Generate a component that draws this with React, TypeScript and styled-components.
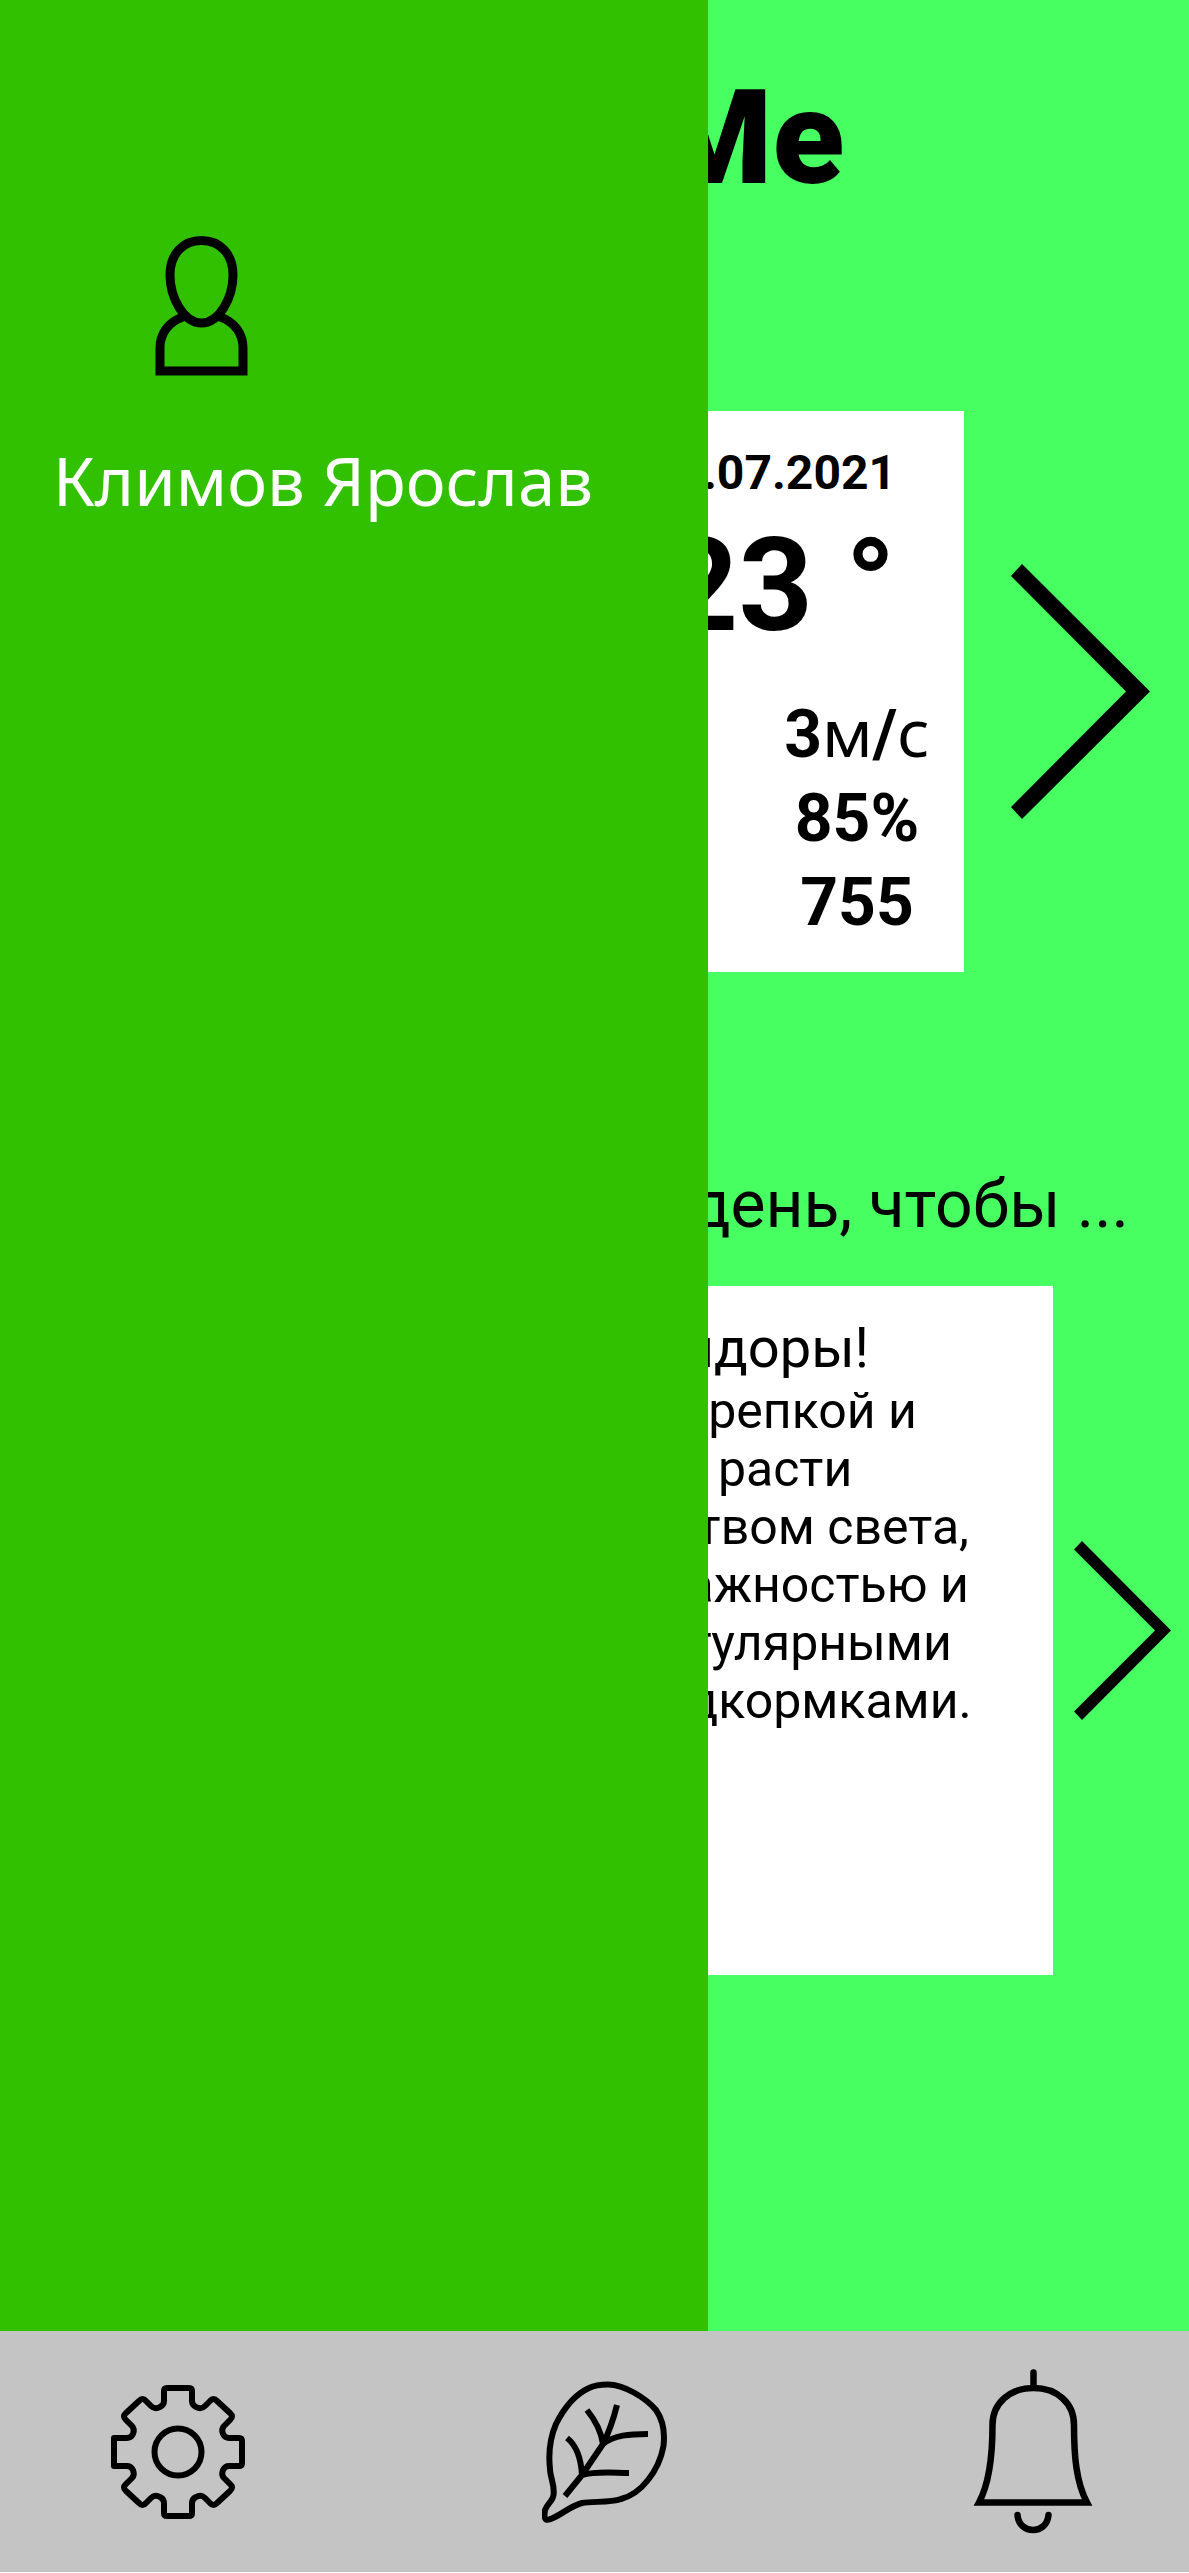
import React from 'react';
import styled, { createGlobalStyle } from 'styled-components';

const GlobalStyle = createGlobalStyle`
  *, *::before, *::after { box-sizing: border-box; }
  body {
    margin: 0;
    background: #fff;
    color: #000;
    font-family: Roboto, 'Noto Sans', sans-serif;
  }
  svg { display: block; }
`;

const Shell = styled.div`
  display: flex;
  flex-direction: column;
  min-height: 100vh;
  padding-bottom: 1px;
  overflow: hidden;
`;

const Screen = styled.div`
  position: relative;
  flex: 1;
  background: #48ff62;
`;

const Main = styled.main`
  display: flex;
  flex-direction: column;
  padding: 60px 0 120px;
`;

const Brand = styled.h1`
  margin: 0 0 195px;
  font-size: 132px;
  line-height: 156px;
  font-weight: 900;
  text-align: center;
`;

const Carousel = styled.section<{ $gap: number }>`
  display: flex;
  align-items: center;
  justify-content: center;
  gap: ${(p) => p.$gap}px;
`;

const ArrowButton = styled.button<{ $flip?: boolean }>`
  flex: none;
  padding: 0;
  border: 0;
  background: none;
  cursor: pointer;
  transform: ${(p) => (p.$flip ? 'scaleX(-1)' : 'none')};
`;

const WeatherCard = styled.article`
  flex: 0 1 739px;
  display: flex;
  flex-direction: column;
  padding: 34px 33px 27px;
  background: #fff;
`;

const WeatherDate = styled.time`
  padding-right: 35px;
  font-size: 48px;
  line-height: 56px;
  font-weight: 700;
  text-align: right;
`;

const Temperature = styled.p`
  margin: 9px 0 31px;
  padding-right: 35px;
  font-size: 130px;
  line-height: 152px;
  font-weight: 700;
  text-align: right;
`;

const Stats = styled.dl`
  display: grid;
  grid-template-columns: 1fr 148px;
  margin: 0;
  line-height: 84px;
`;

const StatName = styled.dt`
  font-size: 50px;
`;

const StatValue = styled.dd`
  margin: 0;
  font-size: 66px;
  font-weight: 700;
  text-align: center;
  white-space: nowrap;
`;

const Unit = styled.span`
  font-family: 'Noto Sans', sans-serif;
  font-weight: 400;
  line-height: 1;
`;

const TipHeading = styled.h2`
  margin: 194px 0 42px;
  font-size: 66px;
  line-height: 78px;
  font-weight: 400;
  text-align: center;
  white-space: nowrap;
`;

const TipCard = styled.article`
  flex: 0 1 917px;
  min-height: 689px;
  padding: 29px 0 29px 15px;
  background: #fff;
  text-align: center;
`;

const TipTitle = styled.h3`
  margin: 0 0 1px;
  font-size: 56px;
  line-height: 66px;
  font-weight: 400;
`;

const TipText = styled.p`
  margin: 0;
  font-size: 50px;
  line-height: 58px;
  white-space: pre-line;
`;

const Drawer = styled.aside`
  position: absolute;
  inset: 0 auto 0 0;
  width: min(708px, 60%);
  padding: 235px 53px 0;
  background: #32c100;
`;

const Avatar = styled.div`
  padding-left: 100px;
  margin-bottom: 57px;
`;

const UserName = styled.p`
  margin: 0;
  color: #fff;
  font-family: 'Noto Sans', sans-serif;
  font-size: 67px;
  line-height: 92px;
  white-space: nowrap;
`;

const TabBar = styled.nav`
  display: flex;
  align-items: center;
  justify-content: space-between;
  height: 241px;
  padding: 0 96px 0 111px;
  background: #c4c4c4;
`;

const TabButton = styled.button`
  padding: 0;
  border: 0;
  background: none;
  cursor: pointer;
`;

const LargeChevron = () => (
  <svg width="139" height="255" viewBox="0 0 139 255" aria-hidden="true">
    <polygon points="0,12 11,0 139,127.5 11,255 0,243 115,127.5" />
  </svg>
);

const SmallChevron = () => (
  <svg width="97" height="179" viewBox="0 0 97 179" aria-hidden="true">
    <polygon points="0,8.5 8,0 97,89.5 8,179 0,170.5 81,89.5" />
  </svg>
);

const PersonIcon = () => (
  <svg width="97" height="142" viewBox="0 0 97 142" fill="none" stroke="#000" strokeWidth="9" aria-hidden="true">
    <path d="M48.5 5.5C30 5.5 17 19 17 40C17 63 31 88 48.5 88S80 63 80 40C80 19 67 5.5 48.5 5.5Z" />
    <path d="M30 82C15 87 7 99 7 113V136H90V113C90 99 82 87 67 82" />
  </svg>
);

const GearIcon = () => (
  <svg width="134" height="134" viewBox="0 0 134 134" fill="none" stroke="#000" strokeWidth="6" strokeLinejoin="round" aria-hidden="true">
    <path d="M56 3H78Q81 3 81 6V16Q81 20 85 22Q90 25 94 21L99 16Q102.500 12 106 16L119 28Q123 31.500 119 35L113 41Q110 44 112 49Q114 53 118 53H128Q131 53 131 56V78Q131 81 128 81H118Q114 81 112 85Q110 90 113 93L119 99Q123 102.500 119 106L106 118Q102.500 122 99 118L94 113Q90 109 85 112Q81 114 81 118V128Q81 131 78 131H56Q53 131 53 128V118Q53 114 49 112Q44 109 40 113L35 118Q31.500 122 28 118L15 106Q11 102.500 15 99L21 93Q24 90 22 85Q20 81 16 81H3V53H16Q20 53 22 49Q24 44 21 41L15 35Q11 31.500 15 28L28 16Q31.500 12 35 16L40 21Q44 25 49 22Q53 20 53 16V6Q53 3 56 3Z" />
    <circle cx="67" cy="67" r="23.5" />
  </svg>
);

const LeafIcon = () => (
  <svg width="134" height="142" viewBox="0 0 134 142" fill="none" stroke="#000" strokeWidth="6" strokeLinejoin="round" aria-hidden="true">
    <path d="M66 3.500C82 3.500 104 17 114 29C121 39 123 52 121.500 65C119 79 114 89 106 99C99 108 90 115 79 118C68 122 51 120 40 122C26 126 17 136 7 138.500C2 140 2 135 3 129C5 123 11 120 11.500 114C13 104 8 96 8 88C6 70 8 57 14 43C22 27 34 13 47 7C53 4 59 3.500 66 3.500Z" />
    <path d="M23 115L40 94L61 63C67 51 71 40 75 24M45 29C53 39 59 49 61 63C72 54 88 53 106 53M25 57C34 64 39 77 40 94C54 90 72 92 87 92" />
  </svg>
);

const BellIcon = () => (
  <svg width="120" height="165" viewBox="0 0 120 165" fill="none" stroke="#000" strokeWidth="6.5" strokeLinecap="round" aria-hidden="true">
    <path d="M60.500 3.500V18" />
    <path d="M19.500 56C19.500 34 37 19 60.500 19S101 34 101 56C101 86 103 113 114 133.500H6C17 113 19.500 86 19.500 56Z" />
    <path d="M44.500 146C46 166 74 166 75.500 146" />
  </svg>
);

export default function App() {
  return (
    <>
      <GlobalStyle />
      <Shell>
        <Screen>
          <Main>
            <Brand>PlantMe</Brand>
            <Carousel $gap={47} aria-label="Погода">
              <ArrowButton $flip aria-label="Предыдущий день">
                <LargeChevron />
              </ArrowButton>
              <WeatherCard>
                <WeatherDate dateTime="2021-07-12">12.07.2021</WeatherDate>
                <Temperature>23 °</Temperature>
                <Stats>
                  <StatName>Ветер</StatName>
                  <StatValue>
                    3<Unit>м</Unit>/<Unit>с</Unit>
                  </StatValue>
                  <StatName>Влажность</StatName>
                  <StatValue>85%</StatValue>
                  <StatName>Давление</StatName>
                  <StatValue>755</StatValue>
                </Stats>
              </WeatherCard>
              <ArrowButton aria-label="Следующий день">
                <LargeChevron />
              </ArrowButton>
            </Carousel>
            <TipHeading>Завтра прекрасный день, чтобы ...</TipHeading>
            <Carousel $gap={21} aria-label="Советы">
              <ArrowButton $flip aria-label="Предыдущий совет">
                <SmallChevron />
              </ArrowButton>
              <TipCard>
                <TipTitle>Сажайте помидоры!</TipTitle>
                <TipText>
                  {[
                    'Чтоб вырастала крепкой и',
                    'здоровой надо расти',
                    'с большим количеством света,',
                    'хорошей тёплой влажностью и',
                    'а также с очень регулярными',
                    'питательными и подкормками.',
                  ].join('\n')}
                </TipText>
              </TipCard>
              <ArrowButton aria-label="Следующий совет">
                <SmallChevron />
              </ArrowButton>
            </Carousel>
          </Main>
          <Drawer aria-label="Профиль">
            <Avatar>
              <PersonIcon />
            </Avatar>
            <UserName>Климов Ярослав</UserName>
          </Drawer>
        </Screen>
        <TabBar>
          <TabButton aria-label="Настройки">
            <GearIcon />
          </TabButton>
          <TabButton aria-label="Растения">
            <LeafIcon />
          </TabButton>
          <TabButton aria-label="Уведомления">
            <BellIcon />
          </TabButton>
        </TabBar>
      </Shell>
    </>
  );
}
